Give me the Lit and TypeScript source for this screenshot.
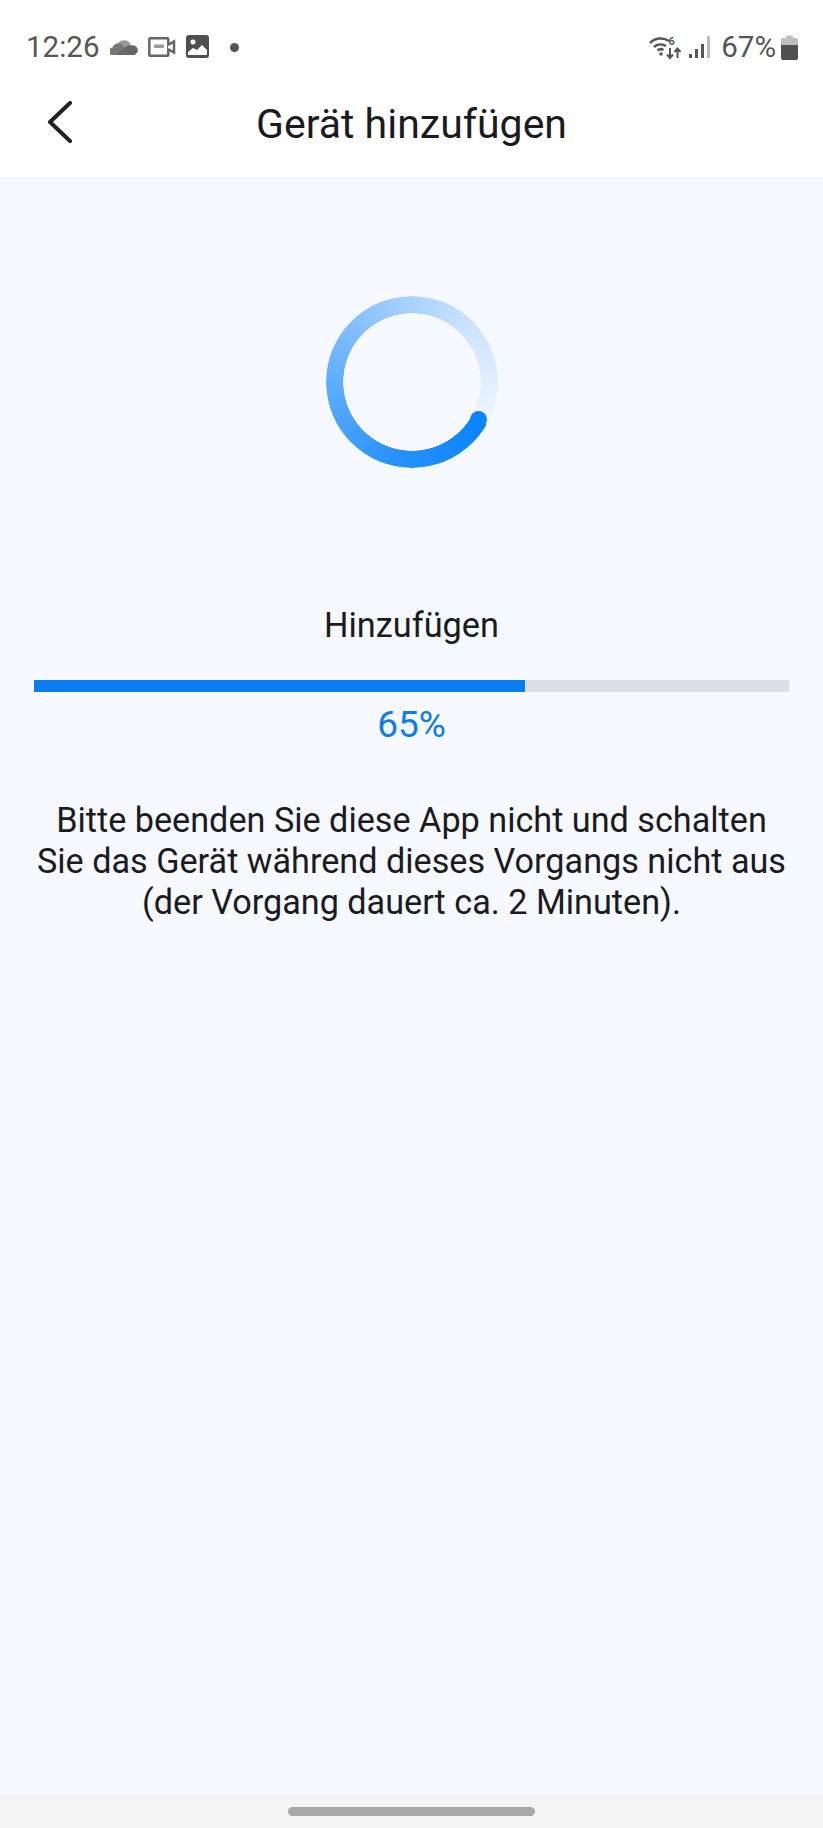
/**
 * Geraet hinzufuegen - progress screen
 */

import { LitElement, html, css } from 'lit';
import { customElement, property } from 'lit/decorators.js';

@customElement('app-root')
export class AppRoot extends LitElement {
  static styles = css`
    :host {
      display: block;
      font-family: Roboto, "Liberation Sans", sans-serif;
    }

    .page {
      display: flex;
      flex-direction: column;
      height: 1828px;
      background: #f6f9ff;
      color: #1b1b1d;
    }

    .top {
      height: 177px;
      background: #fff;
      flex: none;
    }

    .status {
      display: flex;
      align-items: center;
      height: 46px;
      padding: 24px 25px 0 26px;
      color: #555;
      font-size: 29.5px;
    }

    .status svg {
      display: block;
      flex: none;
    }

    .time {
      width: 74px;
    }

    .status-left {
      display: flex;
      align-items: center;
      gap: 10px;
    }

    .dot {
      width: 9px;
      height: 9px;
      border-radius: 50%;
      background: #555;
      margin-left: 10px;
    }

    .status-right {
      display: flex;
      align-items: center;
      margin-left: auto;
    }

    .signal {
      margin-left: 6px;
    }

    .pct {
      margin: 0 5px 0 11px;
    }

    .nav {
      position: relative;
      display: flex;
      align-items: center;
      justify-content: center;
      height: 78px;
      font-size: 41px;
      margin-top: 15px;
    }

    .back {
      position: absolute;
      left: 47px;
      top: 16px;
    }

    .content {
      flex: 1;
      display: flex;
      flex-direction: column;
      align-items: center;
      padding: 119px 34px 0;
    }

    .ring-wrap {
      position: relative;
      width: 172px;
      height: 172px;
    }

    .ring {
      width: 100%;
      height: 100%;
      border-radius: 50%;
      background: conic-gradient(from 120deg, #0a84ff 0deg, #2791ff 70deg, #5fadff 150deg, #a6d0ff 235deg, #cfe4ff 290deg, #eef5ff 358deg);
      -webkit-mask: radial-gradient(circle, transparent 68.5px, #000 69px);
      mask: radial-gradient(circle, transparent 68.5px, #000 69px);
    }

    .cap {
      position: absolute;
      left: 144.5px;
      top: 115px;
      width: 17px;
      height: 17px;
      border-radius: 50%;
      background: #0a84ff;
    }

    .label {
      margin-top: 137px;
      font-size: 34.3px;
      line-height: 40px;
    }

    .bar {
      width: 100%;
      height: 12px;
      margin-top: 35px;
      background: #dcdfe5;
    }

    .fill {
      height: 100%;
      background: #0a7cf2;
    }

    .percent {
      margin-top: 12px;
      font-size: 37px;
      line-height: 42px;
      color: #117ce6;
    }

    .hint {
      margin-top: 54px;
      font-size: 34.2px;
      line-height: 41px;
      text-align: center;
      white-space: nowrap;
    }

    .bottom {
      display: flex;
      justify-content: center;
      flex: none;
      height: 33px;
      padding-top: 12px;
      box-sizing: border-box;
      background: #f5f5f5;
    }

    .handle {
      width: 247px;
      height: 9px;
      border-radius: 5px;
      background: #a8a8a8;
    }
  `;

  @property({ type: Number })
  progress = 65;

  render() {
    return html`
      <div class="page">
        <div class="top">
          <div class="status">
            <div class="status-left">
              <span class="time">12:26</span>
              <svg width="28" height="18" viewBox="0 0 28 18">
                <path fill="#999" d="M7 7a7.500 7.500 0 0 1 14 0l-7 6z"/>
                <path fill="#777" d="M3 17a3.500 3.500 0 0 1-.5-7.500A6 6 0 0 1 11 6l6 5-6 6z"/>
                <path fill="#666" d="M6 17l9-7a5 5 0 0 1 6-2.500 4.500 4.500 0 0 1 3.500 9.500z"/>
              </svg>
              <svg width="28" height="20" viewBox="0 0 28 20" fill="none" stroke="#666" stroke-width="2.500">
                <rect x="1.300" y="1.300" width="19" height="17.500" rx="1"/>
                <rect x="6" y="7.500" width="10" height="3.500" rx="1" fill="#999" stroke="none"/>
                <path d="M20 8l6-3.500v11L20 12" fill="#fff"/>
              </svg>
              <svg width="24" height="24" viewBox="0 0 24 24">
                <rect width="23" height="23" rx="3" fill="#4f4f4f"/>
                <circle cx="7" cy="7" r="2.500" fill="#fff"/>
                <path d="M2 20v-3l5-4 4 2 5-5 5 5v5z" fill="#fff"/>
              </svg>
              <span class="dot"></span>
            </div>
            <div class="status-right">
              <svg width="34" height="25" viewBox="0 0 34 25">
                <g fill="none" stroke="#555" stroke-width="2.500">
                  <path d="M1 8a15 15 0 0 1 19-2"/>
                  <path d="M5 12a10 10 0 0 1 12-1"/>
                  <path d="M8.500 15.500a5 5 0 0 1 6-.5"/>
                </g>
                <circle cx="12" cy="19" r="1.800" fill="#555"/>
                <text x="19.500" y="9.500" font-size="11" font-weight="700" fill="#555" font-family="Roboto">6</text>
                <path d="M21 13v10M18 19.500l3 3.500 3-3.500M28.500 23V14M25.500 17l3-3.500 3 3.500" fill="none" stroke="#555" stroke-width="2"/>
              </svg>
              <svg class="signal" width="21" height="23" viewBox="0 0 21 23">
                <rect x="0" y="18" width="3" height="4" fill="#555"/>
                <rect x="6" y="13" width="3" height="9" fill="#555"/>
                <rect x="12" y="8" width="3" height="14" fill="#555"/>
                <rect x="18" y="0" width="3" height="22" fill="#bbb"/>
              </svg>
              <span class="pct">67%</span>
              <svg width="17" height="25" viewBox="0 0 17 25">
                <path d="M5 1.500a1 1 0 0 1 1-1h5a1 1 0 0 1 1 1V3h3a2 2 0 0 1 2 2v5H0V5a2 2 0 0 1 2-2h3z" fill="#bdbdbd"/>
                <path d="M0 10h17v13a2 2 0 0 1-2 2H2a2 2 0 0 1-2-2z" fill="#505050"/>
              </svg>
            </div>
          </div>
          <div class="nav">
            <svg class="back" width="26" height="42" viewBox="0 0 26 42" fill="none" stroke="#222" stroke-width="4" stroke-linecap="round" stroke-linejoin="round">
              <path d="M23 2L3 21l20 19"/>
            </svg>
            <span>Gerät hinzufügen</span>
          </div>
        </div>
        <div class="content">
          <div class="ring-wrap">
            <div class="ring"></div>
            <div class="cap"></div>
          </div>
          <div class="label">Hinzufügen</div>
          <div class="bar"><div class="fill" style="width:${this.progress}%"></div></div>
          <div class="percent">${this.progress}%</div>
          <div class="hint">
            Bitte beenden Sie diese App nicht und schalten<br>
            Sie das Gerät während dieses Vorgangs nicht aus<br>
            (der Vorgang dauert ca. 2 Minuten).
          </div>
        </div>
        <div class="bottom"><div class="handle"></div></div>
      </div>
    `;
  }
}

declare global {
  interface HTMLElementTagNameMap {
    'app-root': AppRoot;
  }
}
